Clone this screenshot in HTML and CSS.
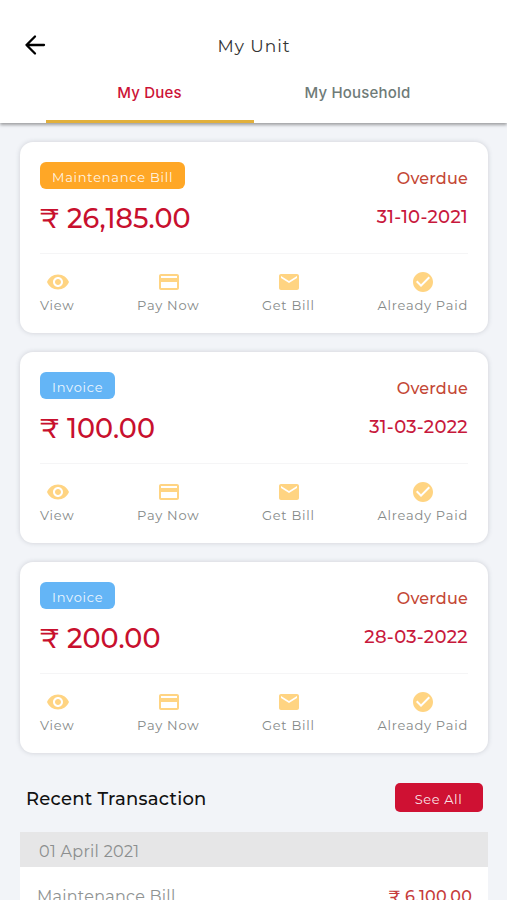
FILE: index.html
```html
<!DOCTYPE html>
<html lang="en">
<head>
  <meta charset="UTF-8">
  <meta name="viewport" content="width=device-width, initial-scale=1.0">
  <title>My Unit</title>
  <link rel="stylesheet" href="styles.css">
</head>
<body>
  <svg class="sprite" width="0" height="0">
    <symbol id="eye" viewBox="0 0 24 24"><path d="M12 4.5C7 4.5 2.73 7.61 1 12c1.73 4.39 6 7.5 11 7.5s9.27-3.11 11-7.5c-1.73-4.39-6-7.5-11-7.5zM12 17c-2.76 0-5-2.24-5-5s2.24-5 5-5 5 2.24 5 5-2.24 5-5 5zm0-8c-1.66 0-3 1.34-3 3s1.34 3 3 3 3-1.34 3-3-1.34-3-3-3z"/></symbol>
    <symbol id="card" viewBox="0 0 24 24"><path d="M20 4H4c-1.11 0-1.99.89-1.99 2L2 18c0 1.11.89 2 2 2h16c1.11 0 2-.89 2-2V6c0-1.11-.89-2-2-2zm0 14H4v-6h16v6zm0-10H4V6h16v2z"/></symbol>
    <symbol id="mail" viewBox="0 0 24 24"><path d="M20 4H4c-1.1 0-1.99.9-1.99 2L2 18c0 1.1.9 2 2 2h16c1.1 0 2-.9 2-2V6c0-1.1-.9-2-2-2zm0 4l-8 5-8-5V6l8 5 8-5v2z"/></symbol>
    <symbol id="check" viewBox="0 0 24 24"><path d="M12 2C6.48 2 2 6.48 2 12s4.480 10 10 10 10-4.480 10-10S17.520 2 12 2zm-2 15l-5-5 1.410-1.410L10 14.170l7.590-7.590L19 8l-9 9z"/></symbol>
  </svg>

  <header class="header">
    <div class="title-bar">
      <svg class="back" viewBox="0 0 22 22"><path d="M20 11H2.500M11 2.500L2.500 11l8.500 8.500"/></svg>
      <h1 class="title">My Unit</h1>
    </div>
    <nav class="tabs">
      <div class="tab active">My Dues</div>
      <div class="tab">My Household</div>
    </nav>
  </header>

  <main class="content">
    <section class="bill">
      <div class="bill-top">
        <div class="bill-info">
          <span class="tag maintenance">Maintenance Bill</span>
          <div class="amount">₹ 26,185.00</div>
        </div>
        <div class="bill-due">
          <div class="status">Overdue</div>
          <div class="date">31-10-2021</div>
        </div>
      </div>
      <div class="actions">
        <div class="action"><svg><use href="#eye"/></svg><span>View</span></div>
        <div class="action"><svg><use href="#card"/></svg><span>Pay Now</span></div>
        <div class="action"><svg><use href="#mail"/></svg><span>Get Bill</span></div>
        <div class="action"><svg><use href="#check"/></svg><span>Already Paid</span></div>
      </div>
    </section>

    <section class="bill">
      <div class="bill-top">
        <div class="bill-info">
          <span class="tag invoice">Invoice</span>
          <div class="amount">₹ 100.00</div>
        </div>
        <div class="bill-due">
          <div class="status">Overdue</div>
          <div class="date">31-03-2022</div>
        </div>
      </div>
      <div class="actions">
        <div class="action"><svg><use href="#eye"/></svg><span>View</span></div>
        <div class="action"><svg><use href="#card"/></svg><span>Pay Now</span></div>
        <div class="action"><svg><use href="#mail"/></svg><span>Get Bill</span></div>
        <div class="action"><svg><use href="#check"/></svg><span>Already Paid</span></div>
      </div>
    </section>

    <section class="bill">
      <div class="bill-top">
        <div class="bill-info">
          <span class="tag invoice">Invoice</span>
          <div class="amount">₹ 200.00</div>
        </div>
        <div class="bill-due">
          <div class="status">Overdue</div>
          <div class="date">28-03-2022</div>
        </div>
      </div>
      <div class="actions">
        <div class="action"><svg><use href="#eye"/></svg><span>View</span></div>
        <div class="action"><svg><use href="#card"/></svg><span>Pay Now</span></div>
        <div class="action"><svg><use href="#mail"/></svg><span>Get Bill</span></div>
        <div class="action"><svg><use href="#check"/></svg><span>Already Paid</span></div>
      </div>
    </section>

    <div class="recent-head">
      <h2 class="recent-title">Recent Transaction</h2>
      <button class="see-all">See All</button>
    </div>
    <div class="transactions">
      <div class="day">01 April 2021</div>
      <div class="transaction">
        <span class="transaction-name">Maintenance Bill</span>
        <span class="transaction-amount">₹ 6,100.00</span>
      </div>
    </div>
  </main>
</body>
</html>
```
FILE: styles.css
```css
* {
  box-sizing: border-box;
}

body {
  margin: 0;
  height: 900px;
  overflow: hidden;
  background: #f2f4f8;
  font-family: Montserrat, Inter, sans-serif;
  white-space: nowrap;
}

.sprite {
  display: block;
}

.header {
  height: 123px;
  background: #fff;
  box-shadow: 0 2px 3px rgba(0, 0, 0, 0.35);
  display: flex;
  flex-direction: column;
}

.title-bar {
  height: 73px;
  padding: 17px 24px 0;
  display: grid;
  grid-template-columns: 22px 1fr 22px;
  align-items: center;
}

.back {
  width: 22px;
  height: 22px;
  fill: none;
  stroke: #000;
  stroke-width: 2.3;
  stroke-linecap: round;
  stroke-linejoin: round;
}

.title {
  margin: 0;
  padding: 1px 0 0 1px;
  text-align: center;
  font-size: 17px;
  font-weight: 400;
  letter-spacing: 1px;
  color: #333;
}

.tabs {
  flex: 1;
  display: grid;
  grid-template-columns: 208px 208px;
  justify-content: center;
}

.tab {
  padding-top: 10px;
  text-align: center;
  font-family: Inter, sans-serif;
  font-size: 15px;
  line-height: 20px;
  font-weight: 500;
  letter-spacing: 0.2px;
  color: #6f7b78;
  border-bottom: 3px solid transparent;
}

.tab.active {
  color: #cc1236;
  border-bottom-color: #e2b03c;
}

.content {
  padding: 19px 19px 0 20px;
  display: flex;
  flex-direction: column;
}

.bill {
  height: 191px;
  margin-bottom: 19px;
  padding: 20px 20px 0;
  background: #fff;
  border-radius: 13px;
  box-shadow: 0 0 5px rgba(60, 65, 80, 0.2);
}

.bill-top {
  height: 92px;
  display: flex;
  justify-content: space-between;
  border-bottom: 1px solid #f5f5f6;
}

.tag {
  display: block;
  width: max-content;
  height: 27px;
  padding: 1px 12px 0;
  border-radius: 6px;
  color: rgba(255, 255, 255, 0.9);
  font-size: 13px;
  line-height: 28px;
  letter-spacing: 0.75px;
}

.maintenance {
  background: #ffa726;
}

.invoice {
  background: #64b5f6;
}

.amount {
  margin-top: 13px;
  font-size: 27px;
  line-height: 34px;
  font-weight: 500;
  letter-spacing: 0.1px;
  color: #c8102e;
}

.bill-due {
  padding-top: 6px;
  text-align: right;
}

.status {
  font-size: 16px;
  line-height: 22px;
  font-weight: 500;
  letter-spacing: 0.2px;
  color: #c44735;
}

.date {
  margin-top: 16px;
  font-size: 18px;
  line-height: 22px;
  font-weight: 500;
  letter-spacing: 0.3px;
  color: #c8183c;
}

.actions {
  padding-top: 16px;
  display: flex;
  justify-content: space-between;
}

.action {
  display: flex;
  flex-direction: column;
  align-items: center;
  font-size: 13px;
  line-height: 20px;
  letter-spacing: 0.75px;
  color: #858988;
}

.action svg {
  width: 24px;
  height: 24px;
  margin: 0 0 1px 1px;
  fill: #ffd482;
}

.recent-head {
  height: 60px;
  padding: 11px 5px 0 6px;
  display: flex;
  justify-content: space-between;
}

.recent-title {
  margin: 0;
  font-size: 18px;
  line-height: 32px;
  font-weight: 500;
  letter-spacing: 0.25px;
  color: #111;
}

.see-all {
  width: 88px;
  height: 29px;
  padding: 3px 1px 0 0;
  border: 0;
  border-radius: 5px;
  background: #cf1133;
  color: rgba(255, 255, 255, 0.9);
  font: 13px Montserrat, Inter, sans-serif;
  letter-spacing: 0.6px;
}

.transactions {
  background: #fff;
}

.day {
  height: 35px;
  padding-left: 19px;
  background: #e6e6e7;
  color: #8b8e8e;
  font-size: 16px;
  line-height: 39px;
  letter-spacing: 0.3px;
}

.transaction {
  height: 60px;
  padding: 19px 16px 0 17px;
  display: flex;
  justify-content: space-between;
  font-size: 16px;
  line-height: 22px;
}

.transaction-name {
  color: #8f9392;
  letter-spacing: 0.25px;
}

.transaction-amount {
  color: #c63c3c;
  font-weight: 500;
  letter-spacing: 0.2px;
}
```
